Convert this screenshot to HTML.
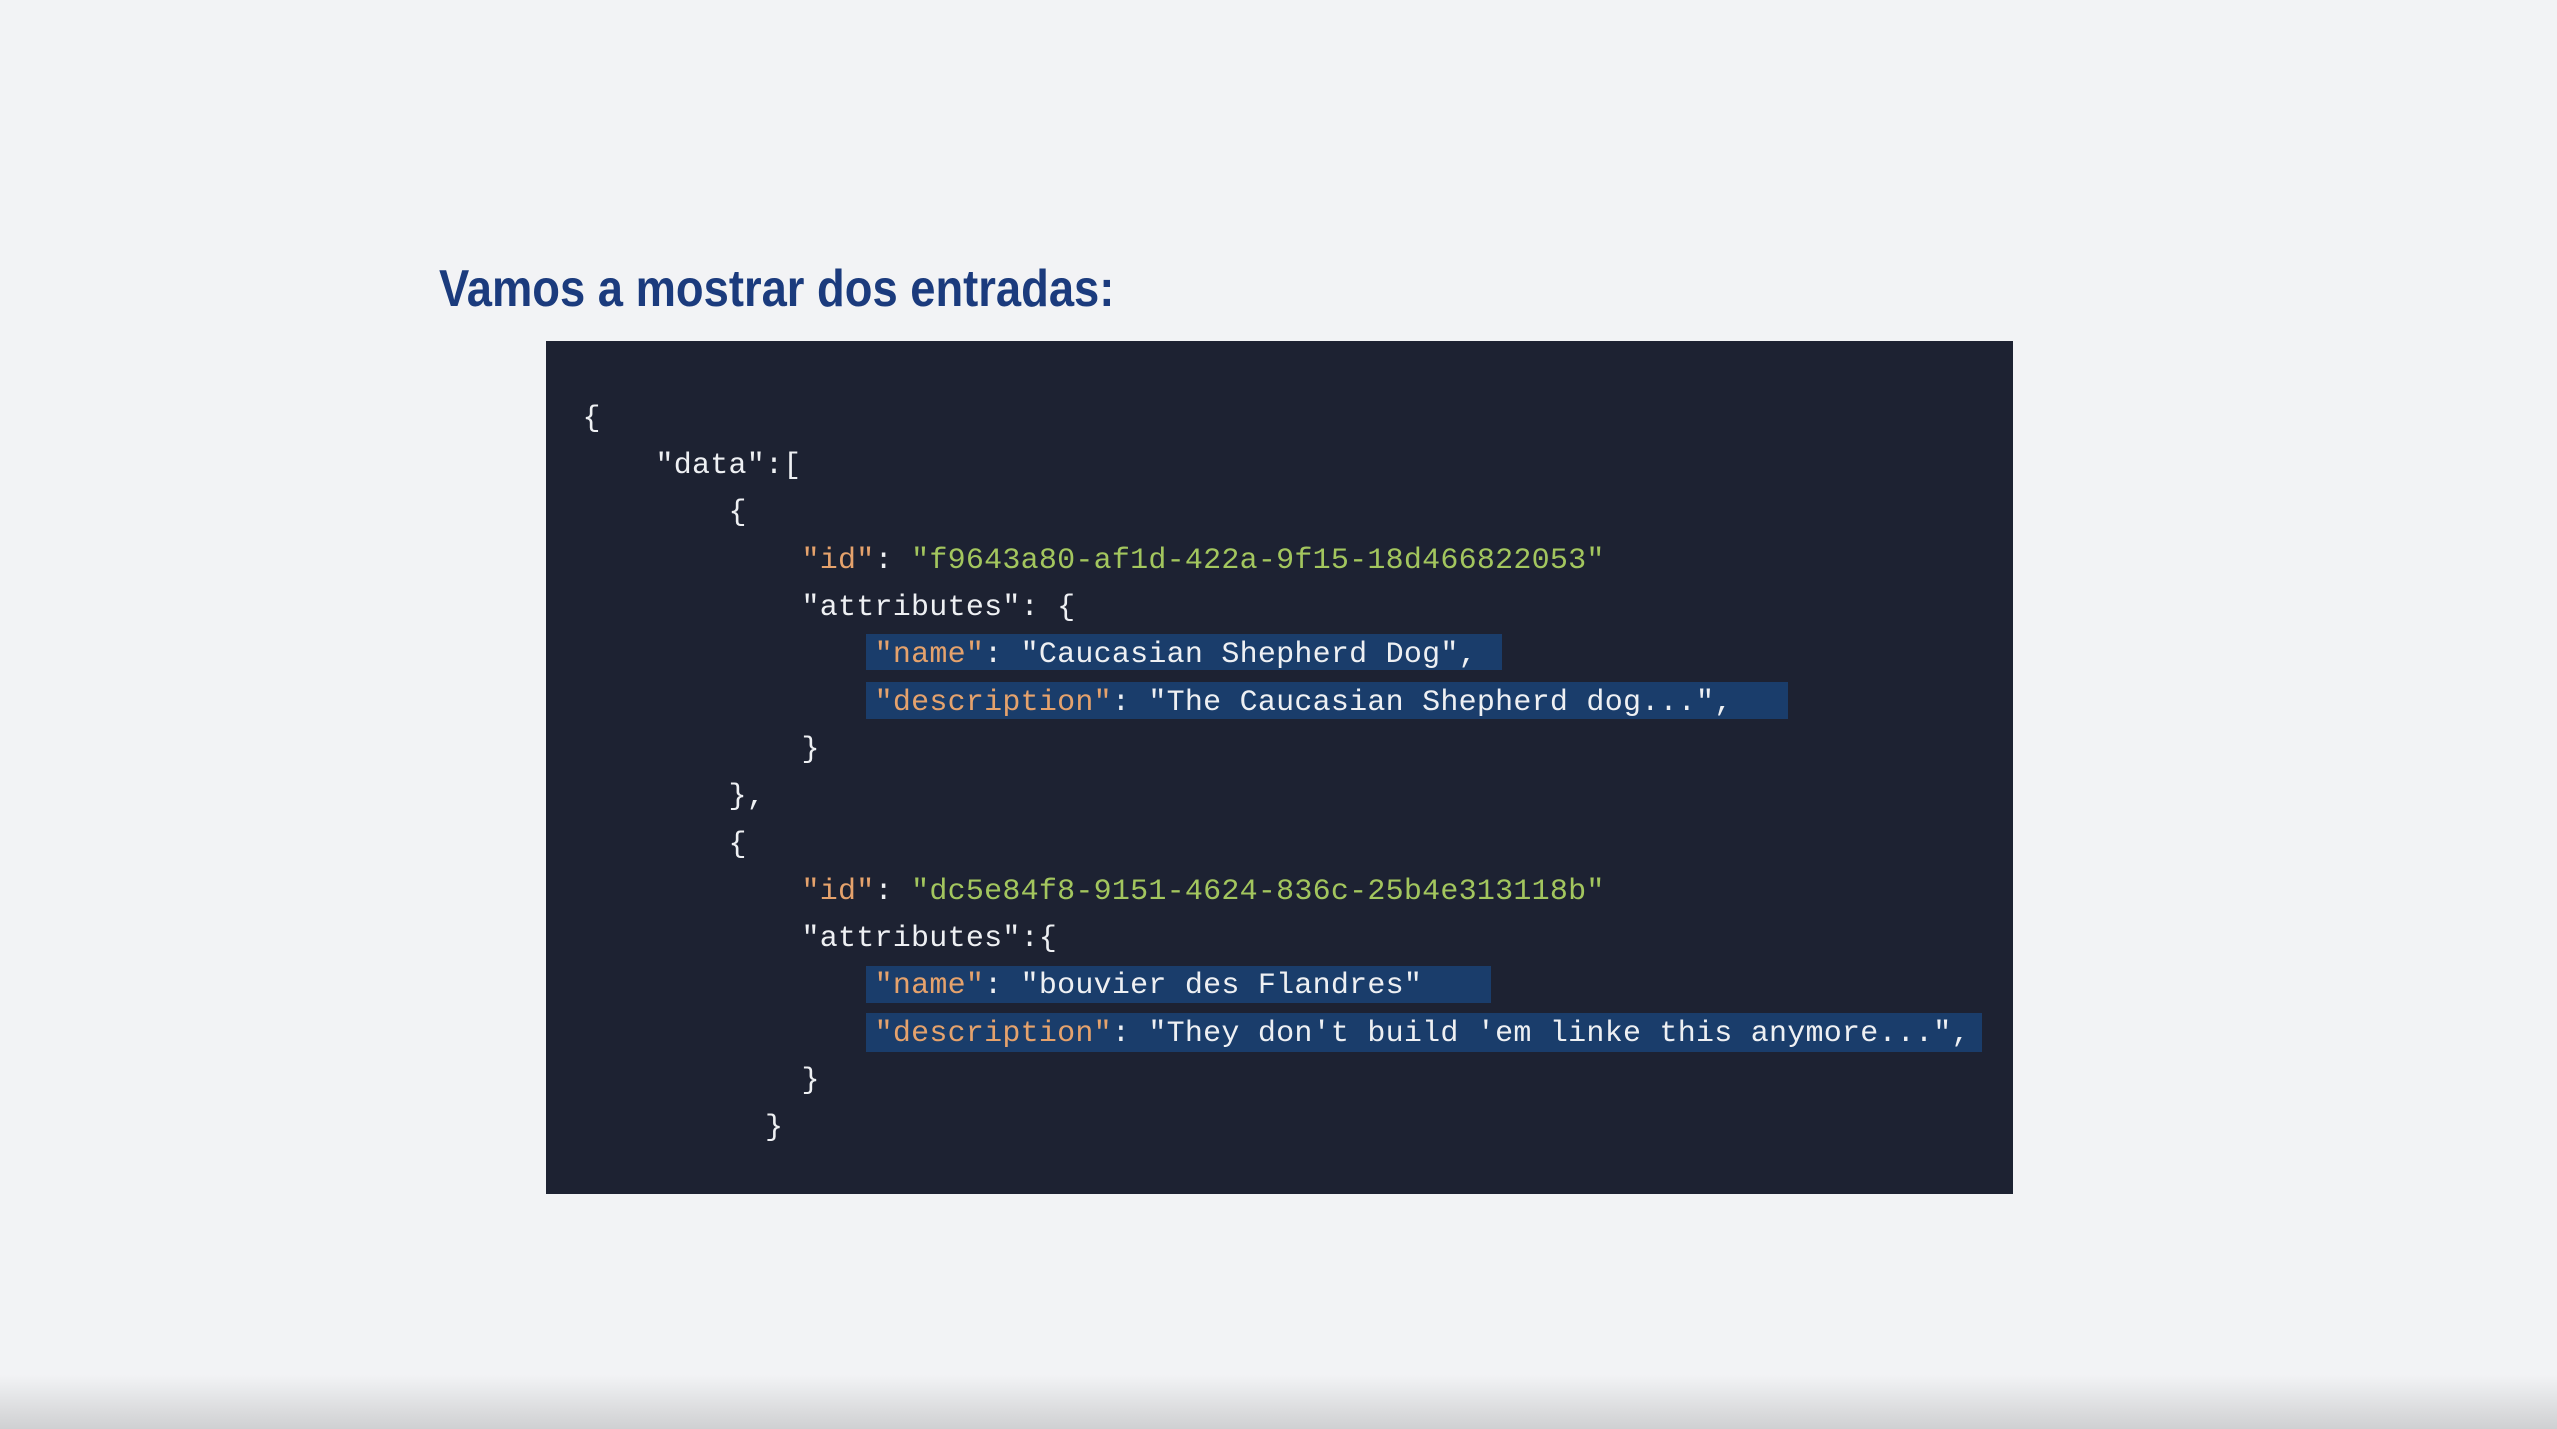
<!DOCTYPE html>
<html><head><meta charset="utf-8"><style>
html,body{margin:0;padding:0}
body{width:2557px;height:1429px;background:#f2f3f5;position:relative;overflow:hidden;font-family:"Liberation Sans",sans-serif}
.title{position:absolute;left:439px;top:254px;font-size:52px;font-weight:bold;color:#1b3b7d;white-space:nowrap;transform:scaleX(0.872);transform-origin:0 0;line-height:70px}
.box{position:absolute;left:546px;top:341px;width:1467px;height:853px;background:#1d2232}
.hl{position:absolute;background:#1a3d6b}
.ln{position:absolute;left:0;font-family:"Liberation Mono",monospace;font-size:30px;letter-spacing:0.25px;color:#eef0f3;white-space:pre;line-height:40px;height:40px}
.k{color:#e5a26c}.s{color:#a3c65e}
.bot{position:absolute;left:0;right:0;top:1375px;height:54px;background:linear-gradient(#f2f3f5,#cfd0d2)}
</style></head><body>
<div class="title">Vamos a mostrar dos entradas:</div>
<div class="box">
<div class="hl" style="left:320px;top:293px;width:636px;height:36px"></div>
<div class="hl" style="left:320px;top:341px;width:922px;height:37px"></div>
<div class="hl" style="left:320px;top:625px;width:625px;height:37px"></div>
<div class="hl" style="left:320px;top:672px;width:1116px;height:39px"></div>
<div class="ln" style="top:58px">  {</div>
<div class="ln" style="top:105px">      "data":[</div>
<div class="ln" style="top:152px">          {</div>
<div class="ln" style="top:200px">              <span class="k">"id"</span>: <span class="s">"f9643a80-af1d-422a-9f15-18d466822053"</span></div>
<div class="ln" style="top:247px">              "attributes": {</div>
<div class="ln" style="top:294px">                  <span class="k">"name"</span>: "Caucasian Shepherd Dog",</div>
<div class="ln" style="top:342px">                  <span class="k">"description"</span>: "The Caucasian Shepherd dog...",</div>
<div class="ln" style="top:389px">              }</div>
<div class="ln" style="top:436px">          },</div>
<div class="ln" style="top:484px">          {</div>
<div class="ln" style="top:531px">              <span class="k">"id"</span>: <span class="s">"dc5e84f8-9151-4624-836c-25b4e313118b"</span></div>
<div class="ln" style="top:578px">              "attributes":{</div>
<div class="ln" style="top:625px">                  <span class="k">"name"</span>: "bouvier des Flandres"</div>
<div class="ln" style="top:673px">                  <span class="k">"description"</span>: "They don't build 'em linke this anymore...",</div>
<div class="ln" style="top:720px">              }</div>
<div class="ln" style="top:767px">            }</div>
</div>
<div class="bot"></div>
</body></html>
